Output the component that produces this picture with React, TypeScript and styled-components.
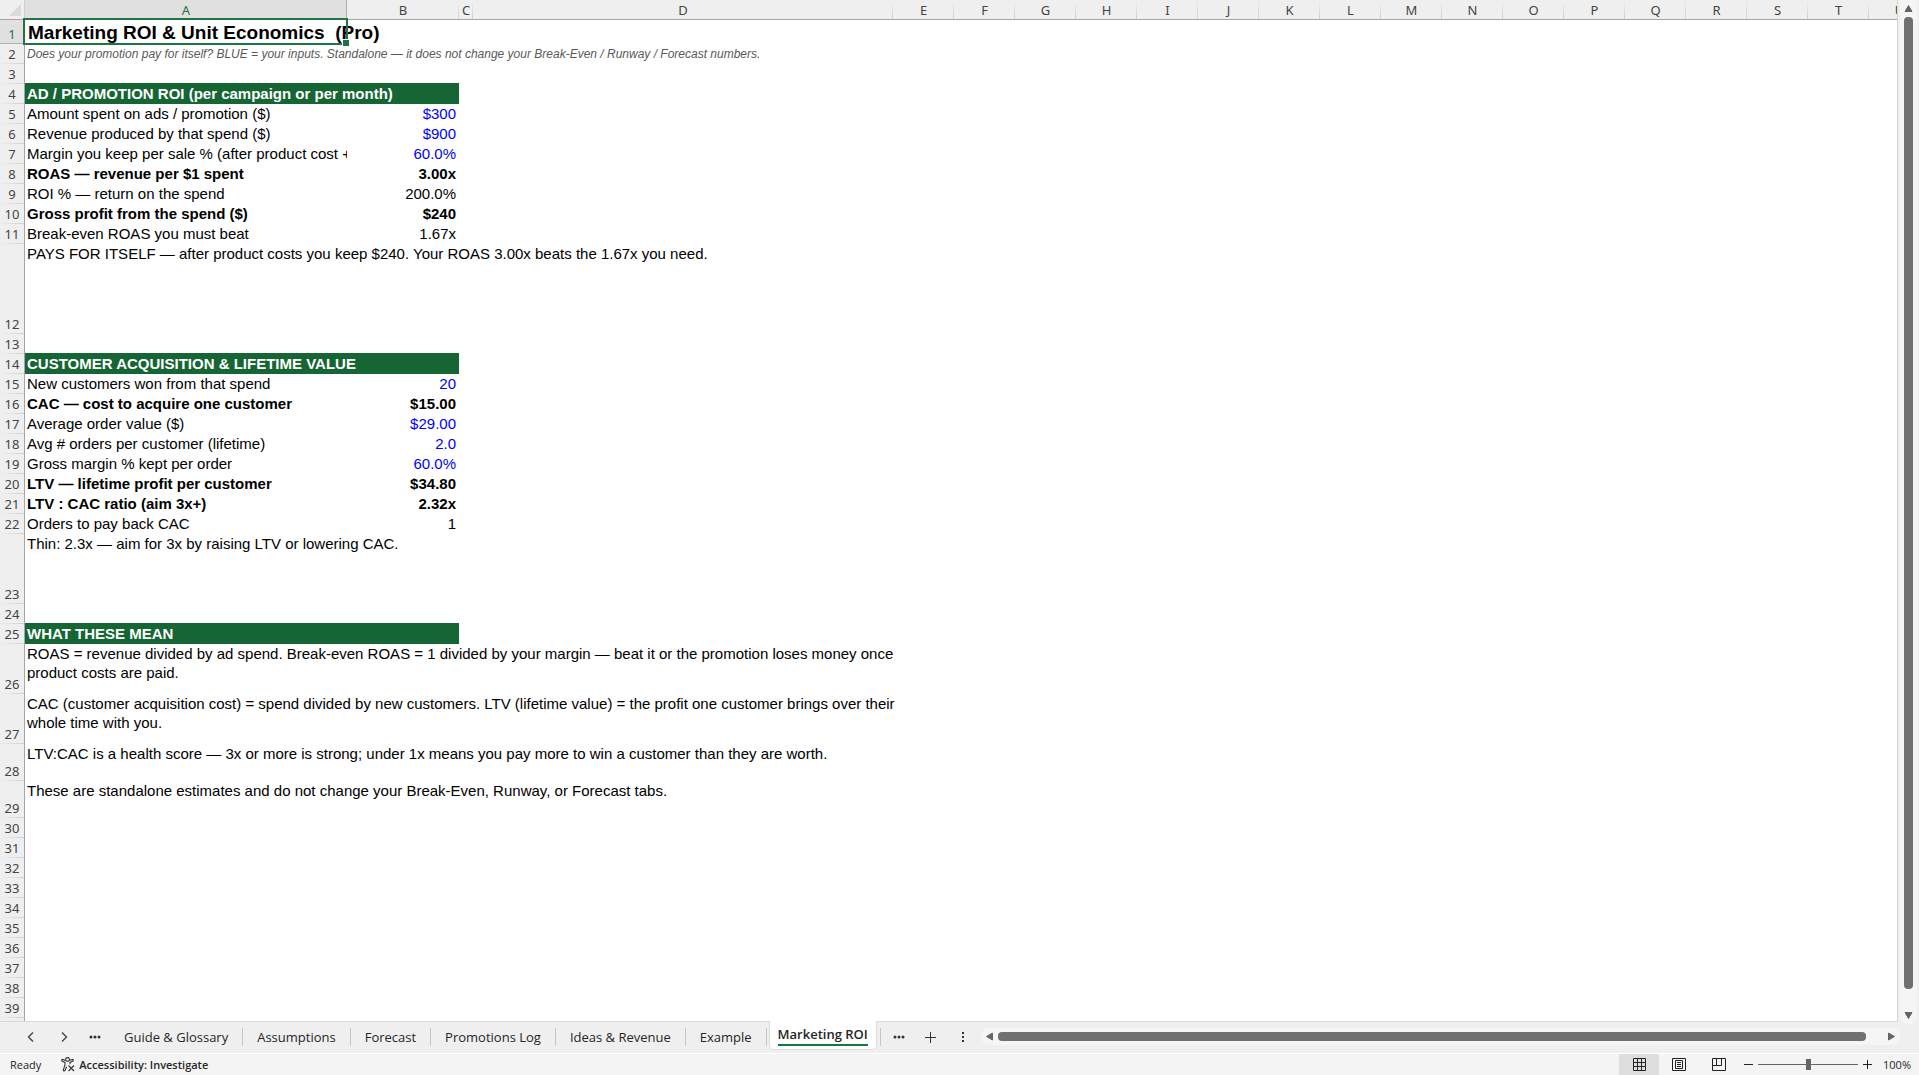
import React from "react";
import styled, { createGlobalStyle, css } from "styled-components";

const UI_FONT = `"Open Sans", "Noto Sans", sans-serif`;
const HEAD_FONT = `"Noto Sans", "Open Sans", sans-serif`;
const CELL_FONT = `"Liberation Sans", Arial, sans-serif`;

const GlobalStyle = createGlobalStyle`
  * { box-sizing: border-box; }
  body { margin: 0; background: #efefef; }
  button { font: inherit; color: inherit; border: 0; padding: 0; background: none; }
`;

const Workbook = styled.div`
  display: flex;
  flex-direction: column;
  height: 100vh;
  overflow: hidden;
  background: #efefef;
  font-family: ${UI_FONT};
  color: #262626;
`;

const Main = styled.main`
  display: flex;
  flex: 1;
  min-height: 0;
`;

const Sheet = styled.section`
  flex: 1;
  min-width: 0;
  overflow: hidden;
  border-right: 1px solid #d6d6d6;
  border-bottom: 1px solid #d9d9d9;
  background: linear-gradient(90deg, #efefef 24px, #a6a6a6 24px, #a6a6a6 25px, #ffffff 25px);
`;

const Grid = styled.table`
  table-layout: fixed;
  width: 0;
  border-collapse: separate;
  border-spacing: 0;
  font-family: ${CELL_FONT};
  font-size: 15px;
  line-height: 19px;
  color: #000000;
`;

const Col = styled.col<{ $w: number }>`
  width: ${(p) => p.$w}px;
`;

const Row = styled.tr<{ $h: number }>`
  height: ${(p) => p.$h}px;
`;

const headText = css`
  padding: 0;
  font-family: ${HEAD_FONT};
  font-size: 13px;
  font-weight: 400;
  line-height: 18px;
  color: #444444;
`;

const Corner = styled.th`
  padding: 0 3px 3px 0;
  height: 20px;
  vertical-align: bottom;
  text-align: right;
  line-height: 0;
  background: #efefef;
  border-right: 1px solid #d0d0d0;
  border-bottom: 1px solid #a6a6a6;
`;

const ColHead = styled.th<{ $active?: boolean }>`
  ${headText}
  height: 20px;
  padding-top: 1px;
  text-align: center;
  border-bottom: 1px solid #a6a6a6;
  background: linear-gradient(180deg, #efefef, #cfcfcf) right / 1px 100% no-repeat #efefef;
  ${(p) =>
    p.$active &&
    css`
      color: #217346;
      background: linear-gradient(#b0b0b0, #b0b0b0) right / 1px 100% no-repeat #e0e0e0;
    `}
`;

const RowHead = styled.th<{ $active?: boolean }>`
  ${headText}
  padding-bottom: 1px;
  vertical-align: bottom;
  text-align: center;
  border-right: 1px solid #a6a6a6;
  background: linear-gradient(90deg, #efefef, #cfcfcf) bottom / 100% 1px no-repeat #efefef;
  ${(p) =>
    p.$active &&
    css`
      color: #217346;
      background: linear-gradient(#b0b0b0, #b0b0b0) bottom / 100% 1px no-repeat #e0e0e0;
    `}
`;

const Cell = styled.td<{ $bold?: boolean; $input?: boolean; $right?: boolean; $clip?: boolean }>`
  padding: 0 3px 0 2px;
  vertical-align: top;
  white-space: nowrap;
  text-align: ${(p) => (p.$right ? "right" : "left")};
  font-weight: ${(p) => (p.$bold ? 700 : 400)};
  color: ${(p) => (p.$input ? "#0000ff" : "#000000")};
  overflow: ${(p) => (p.$clip ? "hidden" : "visible")};
`;

const NoteCell = styled(Cell)`
  white-space: pre;
`;

const BandCell = styled(Cell)`
  background: #166534;
  box-shadow: 0 -1px 0 #166534;
  color: #ffffff;
  font-weight: 700;
`;

const TitleCell = styled(Cell)`
  position: relative;
  padding: 1px 3px 0;
  white-space: pre;
  font-size: 19px;
  font-weight: 700;
  line-height: 23px;
`;

const SubtitleCell = styled(Cell)`
  vertical-align: bottom;
  font-size: 12px;
  font-style: italic;
  color: #595959;
`;

const Selection = styled.span`
  position: absolute;
  inset: -2px -1px -1px -2px;
  border: 2px solid #217346;

  &::after {
    content: "";
    position: absolute;
    right: -3px;
    bottom: -3px;
    width: 6px;
    height: 6px;
    background: #217346;
    border: solid #ffffff;
    border-width: 1px 0 0 1px;
  }
`;

const VTrack = styled.div`
  display: flex;
  flex-direction: column;
  align-items: center;
  width: 17px;
  margin: 0 2px -2px;
  padding: 4px 0;
  gap: 4px;
  border-radius: 0 0 8px 8px;
  background: #f5f5f5;
`;

const HTrack = styled.div`
  display: flex;
  align-items: center;
  flex: 1;
  height: 17px;
  margin: 6px 19px 0 0;
  padding: 0 4px;
  gap: 4px;
  border-radius: 8px;
  background: #f5f5f5;
`;

const Thumb = styled.div<{ $dir: "v" | "h" }>`
  flex: 1;
  border-radius: 4px;
  background: #707070;
  ${(p) => (p.$dir === "v" ? "width: 9px; margin-bottom: 18px;" : "height: 9px; margin-right: 17px;")}
`;

const ArrowButton = styled.button`
  display: flex;
  align-items: center;
  justify-content: center;
  width: 9px;
  height: 9px;
`;

const TabBar = styled.nav`
  display: flex;
  align-items: flex-start;
  height: 31px;
  font-size: 13px;
`;

const TabTools = styled.div`
  display: flex;
  align-items: center;
  height: 30px;
  padding: 0 5px 0 20px;
`;

const ToolGroup = styled.div`
  display: flex;
  align-items: center;
  height: 30px;
`;

const ToolButton = styled.button<{ $w: number }>`
  display: flex;
  align-items: center;
  justify-content: center;
  width: ${(p) => p.$w}px;
  height: 28px;
`;

const Tab = styled.button`
  position: relative;
  height: 30px;
  padding: 0 15px 0 14px;
  line-height: 30px;
  white-space: nowrap;

  &::after {
    content: "";
    position: absolute;
    right: 0;
    top: 6px;
    width: 1px;
    height: 18px;
    background: #c6c6c6;
  }
`;

const ActiveTab = styled.button`
  position: relative;
  height: 29px;
  margin: -1px 3px 0 2px;
  padding: 0 8px;
  border: 1px solid #dcdcdc;
  border-top: 0;
  border-radius: 0 0 5px 5px;
  background: #ffffff;
  font-weight: 600;
  white-space: nowrap;
`;

const ActiveLabel = styled.span`
  display: block;
  height: 25px;
  margin-bottom: 3px;
  line-height: 26px;
  border-bottom: 2px solid #107c41;
`;

const Divider = styled.span`
  width: 1px;
  height: 18px;
  background: #c6c6c6;
`;

const StatusBar = styled.footer`
  display: flex;
  align-items: center;
  height: 22px;
  padding: 0 8px 0 10px;
  border-top: 1px solid #ffffff;
  background: #f4f4f4;
  font-size: 11px;
  line-height: 20px;
`;

const StatusButton = styled.button<{ $strong?: boolean }>`
  display: flex;
  align-items: center;
  gap: 4px;
  margin-left: 20px;
  font-weight: ${(p) => (p.$strong ? 600 : 400)};
`;

const Spacer = styled.div`
  flex: 1;
`;

const ViewButton = styled.button<{ $active?: boolean }>`
  display: flex;
  align-items: center;
  justify-content: center;
  width: 40px;
  height: 21px;
  background: ${(p) => (p.$active ? "#dedede" : "transparent")};
`;

const ZoomButton = styled.button`
  display: flex;
  align-items: center;
  justify-content: center;
  width: 19px;
  height: 20px;
`;

const ZoomSlider = styled.input`
  appearance: none;
  width: 100px;
  height: 12px;
  margin: 0;
  background: linear-gradient(#666666, #666666) center / 100% 1px no-repeat;

  &::-webkit-slider-thumb {
    appearance: none;
    width: 5px;
    height: 11px;
    background: #666666;
  }
`;

const ZoomLevel = styled.button`
  width: 34px;
  text-align: right;
`;

type Entry = {
  h?: number;
  kind?: "title" | "subtitle" | "band" | "note" | "data";
  label?: string;
  value?: string;
  bold?: boolean;
  input?: boolean;
};

const data = (label: string, value: string, opts: Partial<Entry> = {}): Entry => ({
  kind: "data",
  label,
  value,
  ...opts,
});

const entries: Entry[] = [
  { kind: "title", h: 24, label: "Marketing ROI & Unit Economics  (Pro)" },
  {
    kind: "subtitle",
    label:
      "Does your promotion pay for itself? BLUE = your inputs. Standalone — it does not change your Break-Even / Runway / Forecast numbers.",
  },
  {},
  { kind: "band", label: "AD / PROMOTION ROI (per campaign or per month)" },
  data("Amount spent on ads / promotion ($)", "$300", { input: true }),
  data("Revenue produced by that spend ($)", "$900", { input: true }),
  data("Margin you keep per sale % (after product cost + fees)", "60.0%", { input: true }),
  data("ROAS — revenue per $1 spent", "3.00x", { bold: true }),
  data("ROI % — return on the spend", "200.0%"),
  data("Gross profit from the spend ($)", "$240", { bold: true }),
  data("Break-even ROAS you must beat", "1.67x"),
  {
    kind: "note",
    h: 90,
    label: "PAYS FOR ITSELF — after product costs you keep $240. Your ROAS 3.00x beats the 1.67x you need.",
  },
  {},
  { kind: "band", label: "CUSTOMER ACQUISITION & LIFETIME VALUE" },
  data("New customers won from that spend", "20", { input: true }),
  data("CAC — cost to acquire one customer", "$15.00", { bold: true }),
  data("Average order value ($)", "$29.00", { input: true }),
  data("Avg # orders per customer (lifetime)", "2.0", { input: true }),
  data("Gross margin % kept per order", "60.0%", { input: true }),
  data("LTV — lifetime profit per customer", "$34.80", { bold: true }),
  data("LTV : CAC ratio (aim 3x+)", "2.32x", { bold: true }),
  data("Orders to pay back CAC", "1"),
  { kind: "note", h: 70, label: "Thin: 2.3x — aim for 3x by raising LTV or lowering CAC." },
  {},
  { kind: "band", label: "WHAT THESE MEAN" },
  {
    kind: "note",
    h: 50,
    label:
      "ROAS = revenue divided by ad spend. Break-even ROAS = 1 divided by your margin — beat it or the promotion loses money once\nproduct costs are paid.",
  },
  {
    kind: "note",
    h: 50,
    label:
      "CAC (customer acquisition cost) = spend divided by new customers. LTV (lifetime value) = the profit one customer brings over their\nwhole time with you.",
  },
  {
    kind: "note",
    h: 37,
    label:
      "LTV:CAC is a health score — 3x or more is strong; under 1x means you pay more to win a customer than they are worth.",
  },
  {
    kind: "note",
    h: 37,
    label: "These are standalone estimates and do not change your Break-Even, Runway, or Forecast tabs.",
  },
  ...Array.from({ length: 10 }, () => ({})),
];

const columns = "ABCDEFGHIJKLMNOPQRSTU".split("");
const firstWidths = [322, 112, 14, 420];
const tabsBefore = ["Guide & Glossary", "Assumptions", "Forecast", "Promotions Log", "Ideas & Revenue", "Example"];

function RowCells({ entry }: { entry: Entry }) {
  switch (entry.kind) {
    case "title":
      return (
        <TitleCell>
          {entry.label}
          <Selection />
        </TitleCell>
      );
    case "subtitle":
      return <SubtitleCell colSpan={4}>{entry.label}</SubtitleCell>;
    case "band":
      return <BandCell colSpan={2}>{entry.label}</BandCell>;
    case "note":
      return <NoteCell colSpan={4}>{entry.label}</NoteCell>;
    case "data":
      return (
        <>
          <Cell $bold={entry.bold} $clip>
            {entry.label}
          </Cell>
          <Cell $bold={entry.bold} $input={entry.input} $right>
            {entry.value}
          </Cell>
        </>
      );
    default:
      return <Cell />;
  }
}

const Arrow = ({ d }: { d: string }) => (
  <svg width="9" height="9" viewBox="0 0 9 9" aria-hidden="true">
    <path d={d} fill="#666666" stroke="#666666" strokeLinejoin="round" />
  </svg>
);

const Chevron = ({ d }: { d: string }) => (
  <svg width="8" height="12" viewBox="0 0 8 12" fill="none" stroke="#444444" strokeWidth="1.4" aria-hidden="true">
    <path d={d} />
  </svg>
);

const Dots = () => (
  <svg width="12" height="4" viewBox="0 0 12 4" fill="#333333" aria-hidden="true">
    <circle cx="2" cy="2" r="1.5" />
    <circle cx="6" cy="2" r="1.5" />
    <circle cx="10" cy="2" r="1.5" />
  </svg>
);

export default function App() {
  return (
    <Workbook>
      <GlobalStyle />
      <Main>
        <Sheet>
          <Grid>
            <colgroup>
              <Col $w={25} />
              {columns.map((c, i) => (
                <Col key={c} $w={firstWidths[i] ?? 61} />
              ))}
            </colgroup>
            <thead>
              <tr>
                <Corner>
                  <svg width="12" height="12" viewBox="0 0 12 12" aria-hidden="true">
                    <path d="M12 0V12H0Z" fill="#dadada" />
                  </svg>
                </Corner>
                {columns.map((c, i) => (
                  <ColHead key={c} scope="col" $active={i === 0}>
                    {c}
                  </ColHead>
                ))}
              </tr>
            </thead>
            <tbody>
              {entries.map((entry, i) => (
                <Row key={i} $h={entry.h ?? 20}>
                  <RowHead scope="row" $active={i === 0}>
                    {i + 1}
                  </RowHead>
                  <RowCells entry={entry} />
                </Row>
              ))}
            </tbody>
          </Grid>
        </Sheet>
        <VTrack>
          <ArrowButton aria-label="Scroll up">
            <Arrow d="M4.5 1.5L8 7.5H1Z" />
          </ArrowButton>
          <Thumb $dir="v" />
          <ArrowButton aria-label="Scroll down">
            <Arrow d="M4.5 7.5L8 1.5H1Z" />
          </ArrowButton>
        </VTrack>
      </Main>

      <TabBar>
        <TabTools>
          <ToolButton $w={22} aria-label="Previous sheet">
            <Chevron d="M6 1.5L1.5 6L6 10.5" />
          </ToolButton>
          <ToolButton $w={43} aria-label="Next sheet">
            <Chevron d="M2 1.5L6.5 6L2 10.5" />
          </ToolButton>
          <ToolButton $w={20} aria-label="More sheets to the left">
            <Dots />
          </ToolButton>
        </TabTools>
        {tabsBefore.map((t) => (
          <Tab key={t}>{t}</Tab>
        ))}
        <ActiveTab aria-current="page">
          <ActiveLabel>Marketing ROI</ActiveLabel>
        </ActiveTab>
        <ToolGroup>
          <Divider />
          <ToolButton $w={36} aria-label="More sheets to the right">
            <Dots />
          </ToolButton>
          <ToolButton $w={28} aria-label="New sheet">
            <svg width="11" height="11" viewBox="0 0 11 11" stroke="#333333" aria-hidden="true">
              <path d="M5.5 0V11M0 5.5H11" />
            </svg>
          </ToolButton>
          <ToolButton $w={36} aria-label="Resize tab area">
            <svg width="2" height="12" viewBox="0 0 2 12" fill="#333333" aria-hidden="true">
              <path d="M0 1H2V3H0ZM0 5H2V7H0ZM0 9H2V11H0Z" />
            </svg>
          </ToolButton>
        </ToolGroup>
        <HTrack>
          <ArrowButton aria-label="Scroll left">
            <Arrow d="M1.5 4.5L7.5 1V8Z" />
          </ArrowButton>
          <Thumb $dir="h" />
          <ArrowButton aria-label="Scroll right">
            <Arrow d="M7.5 4.5L1.5 1V8Z" />
          </ArrowButton>
        </HTrack>
      </TabBar>

      <StatusBar>
        <span>Ready</span>
        <StatusButton $strong>
          <svg width="14" height="15" viewBox="0 0 14 15" fill="none" stroke="#333333" strokeWidth="1.1" aria-hidden="true">
            <circle cx="6.5" cy="2.5" r="1.9" />
            <path d="M4.6 3.4L2 2.4C.8 2 .2 3.7 1.3 4.2L4 5.4V8L2.4 12.6C2 13.9 3.6 14.5 4.1 13.3L5.6 9.8M8.4 3.4L11 2.4C12.2 2 12.8 3.7 11.7 4.2L9 5.4V7.2" />
            <path d="M7.5 8.5L13 14M13 8.5L7.5 14" />
          </svg>
          Accessibility: Investigate
        </StatusButton>
        <Spacer />
        <ViewButton $active aria-label="Normal view">
          <svg width="13" height="13" viewBox="0 0 13 13" fill="none" stroke="#222222" aria-hidden="true">
            <path d="M.5 .5H12.5V12.5H.5ZM4.5 0V13M8.5 0V13M0 4.5H13M0 8.5H13" />
          </svg>
        </ViewButton>
        <ViewButton aria-label="Page layout view">
          <svg width="14" height="13" viewBox="0 0 14 13" fill="none" stroke="#222222" aria-hidden="true">
            <path d="M.5 .5H13.5V12.5H.5ZM3.5 2.5H10.5V10.5H3.5ZM5 4.5H9M5 6.5H9M5 8.5H9" />
          </svg>
        </ViewButton>
        <ViewButton aria-label="Page break preview">
          <svg width="14" height="13" viewBox="0 0 14 13" fill="none" stroke="#222222" aria-hidden="true">
            <path d="M.5 .5H13.5V12.5H.5ZM4.5 0V7.5M9.5 0V7.5M0 7.5H9.5" />
          </svg>
        </ViewButton>
        <ZoomButton aria-label="Zoom out">
          <svg width="9" height="9" viewBox="0 0 9 9" stroke="#222222" aria-hidden="true">
            <path d="M0 4.5H9" />
          </svg>
        </ZoomButton>
        <ZoomSlider type="range" min={10} max={190} defaultValue={100} aria-label="Zoom" />
        <ZoomButton aria-label="Zoom in">
          <svg width="9" height="9" viewBox="0 0 9 9" stroke="#222222" aria-hidden="true">
            <path d="M0 4.5H9M4.5 0V9" />
          </svg>
        </ZoomButton>
        <ZoomLevel>100%</ZoomLevel>
      </StatusBar>
    </Workbook>
  );
}
